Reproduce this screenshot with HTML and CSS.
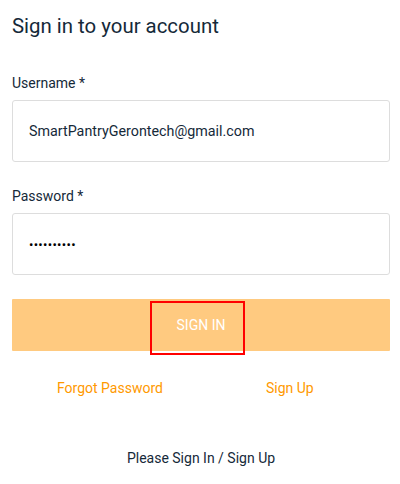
FILE: index.html
```html
<!DOCTYPE html>
<html>
<head>
<meta charset="utf-8">
<link rel="stylesheet" href="styles.css">
</head>
<body>
<div class="page">
  <h1 class="title">Sign in to your account</h1>
  <div class="field">
    <label class="label">Username *</label>
    <div class="input">SmartPantryGerontech@gmail.com</div>
  </div>
  <div class="field">
    <label class="label">Password *</label>
    <div class="input pw">••••••••••</div>
  </div>
  <div class="btn"><span class="btn-text">SIGN IN</span><span class="highlight"></span></div>
  <div class="links">
    <span class="link">Forgot Password</span>
    <span class="link">Sign Up</span>
  </div>
  <div class="footer">Please Sign In / Sign Up</div>
</div>
</body>
</html>
```

FILE: styles.css
```css
html, body { margin: 0; padding: 0; background: #fff; }
body { font-family: Roboto, "Liberation Sans", sans-serif; width: 400px; height: 484px; overflow: hidden; }
.page { padding: 0 10px 0 12px; }
.title { margin: 0; padding-top: 14px; font-size: 20.4px; font-weight: 400; color: #152939; line-height: 24px; }
.field { display: flex; flex-direction: column; }
.label { font-size: 14px; color: #152939; line-height: 16px; margin-top: 37px; margin-bottom: 9px; }
.field + .field .label { margin-top: 26px; }
.input { border: 1px solid #ddd; border-radius: 3px; box-sizing: border-box; height: 62px; display: flex; align-items: center; padding-left: 16px; font-size: 14.3px; color: #152939; }
.pw { font-size: 13px; letter-spacing: 0.3px; color: #000; }
.btn { position: relative; margin-top: 24px; height: 52px; background: #ffca80; border-radius: 1px; display: flex; align-items: center; justify-content: center; }
.btn-text { color: #fff; font-size: 14px; }
.highlight { position: absolute; left: 138px; top: 2px; width: 95px; height: 54px; border: 2px solid #f00; box-sizing: border-box; }
.links { display: flex; margin-top: 29px; font-size: 14px; color: #ff9900; line-height: 16px; }
.link:first-child { margin-left: 45px; }
.link:last-child { margin-left: 103px; }
.footer { text-align: center; margin-top: 54px; font-size: 14px; color: #152939; line-height: 16px; }
```
